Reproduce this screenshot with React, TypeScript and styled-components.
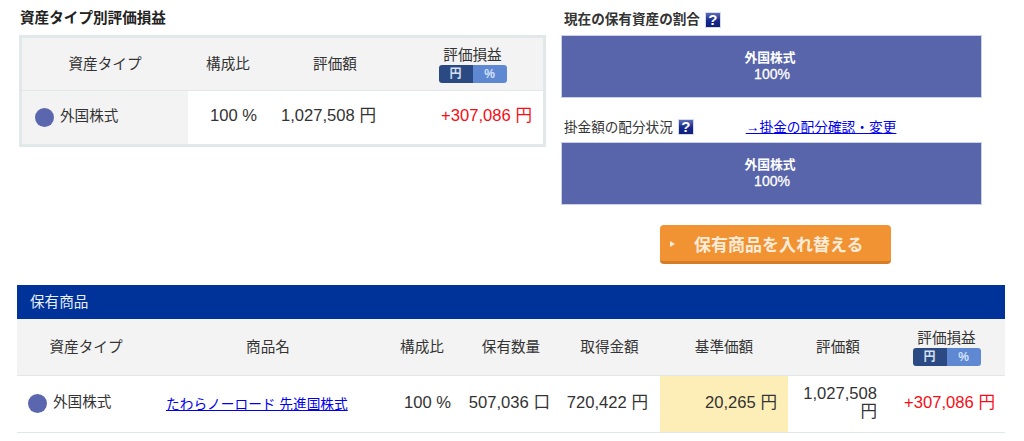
import React from "react";
import styled, { createGlobalStyle } from "styled-components";

const Global = createGlobalStyle`
  html, body { margin: 0; padding: 0; background: #fff; }
  body { font-family: "Liberation Sans", "Noto Sans CJK JP", sans-serif; color: #333; font-size: 15px; }
  * { box-sizing: border-box; }
`;

const Page = styled.div`
  width: 1024px;
  height: 441px;
  overflow: hidden;
  display: flex;
  flex-direction: column;
`;
const Top = styled.div`
  height: 285px;
  display: flex;
  padding: 9px 0 0 19px;
`;
const LeftCol = styled.section`
  width: 527px;
  margin-right: 15px;
`;
const RightCol = styled.section`
  width: 421px;
  display: flex;
  flex-direction: column;
`;
const Title = styled.h2`
  margin: 0 0 8px 1px;
  height: 18px;
  font-size: 14.6px;
  line-height: 18px;
  font-weight: 700;
  color: #222;
`;
const SideHead = styled.div`
  height: 26px;
  padding: 2px 0 0 3px;
  display: flex;
  align-items: flex-start;
`;
const SideTitle = styled.span<{ $bold?: boolean }>`
  font-size: 13.6px;
  line-height: 18px;
  margin-top: ${p => (p.$bold ? 0 : 1)}px;
  font-weight: ${p => (p.$bold ? 700 : 400)};
  color: #333;
`;
const Help = styled.span`
  width: 16px;
  height: 16px;
  margin: 1px 0 0 5px;
  background: linear-gradient(#5c6bb5 0%, #16288a 55%, #0f1f7c 100%);
  border: 1px solid #d5dbee;
  color: #fff;
  font-size: 15px;
  font-weight: 700;
  line-height: 14px;
  text-align: center;
`;
const SideLink = styled.a`
  margin-left: 52px;
  font-size: 13.7px;
  line-height: 18px;
  margin-top: 1px;
  color: #0000ee;
  text-decoration: underline;
`;
const Bar = styled.div`
  height: 63px;
  background: #5865ab;
  border: 1px solid #ccd2ec;
  color: #fff;
  display: flex;
  flex-direction: column;
  align-items: center;
  justify-content: center;
  padding-bottom: 2px;
  font-size: 12.8px;
  line-height: 17px;
  font-weight: 700;
  margin-bottom: 18px;
`;
const BarPct = styled.span`
  font-size: 14px;
  font-weight: 400;
  -webkit-text-stroke: 0.3px #fff;
  padding-left: 1px;
`;
const BarLabel = styled.span`
  padding-right: 3px;
`;
const Swap = styled.button`
  align-self: flex-start;
  margin: 2px 0 0 99px;
  width: 231px;
  height: 39px;
  border: 0;
  border-bottom: 3px solid #d47d25;
  border-radius: 4px;
  background: #f19233;
  color: #fdebd8;
  font-family: inherit;
  font-size: 17px;
  font-weight: 700;
  display: flex;
  align-items: center;
  padding: 1px 0 0 10px;
`;
const Arrow = styled.span`
  width: 0;
  height: 0;
  border-left: 5px solid #fdebd8;
  border-top: 3.5px solid transparent;
  border-bottom: 3.5px solid transparent;
  margin-right: 19px;
`;

const SummaryBox = styled.div`
  border: 3px solid #e0e8ea;
`;
const Row = styled.div<{ $cols: string; $h: number; $line?: boolean }>`
  display: grid;
  grid-template-columns: ${p => p.$cols};
  height: ${p => p.$h}px;
  border-bottom: ${p => (p.$line ? "1px solid #e0e8ea" : "0")};
`;
const Head = styled.div`
  background: #f3f3f3;
  display: flex;
  flex-direction: column;
  align-items: center;
  justify-content: center;
  font-size: 14.6px;
  line-height: 18px;
  color: #333;
`;
const Cell = styled.div<{ $pr?: number; $bg?: string; $red?: boolean; $wrap?: boolean }>`
  display: flex;
  align-items: center;
  justify-content: flex-end;
  text-align: right;
  white-space: ${p => (p.$wrap ? "normal" : "nowrap")};
  padding: 0 ${p => p.$pr ?? 11}px 3px ${p => (p.$wrap ? 10 : 0)}px;
  background: ${p => p.$bg ?? "transparent"};
  color: ${p => (p.$red ? "#f60d16" : "#333")};
  font-size: 16.6px;
  line-height: 18px;
`;
const TypeCell = styled.div<{ $bg?: string; $pl: number }>`
  display: flex;
  align-items: center;
  gap: 6px;
  padding: 0 0 1px ${p => p.$pl}px;
  background: ${p => p.$bg ?? "transparent"};
  font-size: 14.6px;
  line-height: 18px;
`;
const TypeText = styled.span`
  margin-top: -3px;
`;
const Dot = styled.span`
  width: 19px;
  height: 19px;
  border-radius: 50%;
  background: #5a66ad;
`;
const NameCell = styled.div`
  display: flex;
  align-items: center;
  padding: 0 0 3px 11px;
`;
const NameLink = styled.a`
  font-size: 13.7px;
  color: #0000ee;
  text-decoration: underline;
`;
const Toggle = styled.div`
  width: 68px;
  height: 18px;
  display: grid;
  grid-template-columns: 1fr 1fr;
  border-radius: 3px;
  overflow: hidden;
  font-size: 12px;
  line-height: 18px;
  font-weight: 700;
  text-align: center;
  margin-top: 1px;
`;
const ToggleYen = styled.span`
  background: #2b4a84;
  color: #d5e0f2;
`;
const TogglePct = styled.span`
  background: #5f88d3;
  color: #d5e4fa;
`;

const Holdings = styled.section`
  margin-left: 17px;
  width: 988px;
`;
const Banner = styled.div`
  height: 34px;
  background: #003399;
  color: #e8eefa;
  font-size: 14.6px;
  line-height: 34px;
  padding-left: 13px;
`;

const sumCols = "166px 80px 134px 141px";
const holdCols = "138px 226px 82px 96px 101px 128px 100px 117px";

const LossHead = () => (
  <Head>
    評価損益
    <Toggle>
      <ToggleYen>円</ToggleYen>
      <TogglePct>%</TogglePct>
    </Toggle>
  </Head>
);

export default function App() {
  return (
    <Page>
      <Global />
      <Top>
        <LeftCol>
          <Title>資産タイプ別評価損益</Title>
          <SummaryBox>
            <Row $cols={sumCols} $h={53} $line>
              <Head>資産タイプ</Head>
              <Head>構成比</Head>
              <Head>評価額</Head>
              <LossHead />
            </Row>
            <Row $cols={sumCols} $h={53}>
              <TypeCell $bg="#f3f3f3" $pl={13}>
                <Dot />
                <TypeText>外国株式</TypeText>
              </TypeCell>
              <Cell>100 %</Cell>
              <Cell $pr={26}>1,027,508 円</Cell>
              <Cell $red>+307,086 円</Cell>
            </Row>
          </SummaryBox>
        </LeftCol>
        <RightCol>
          <SideHead>
            <SideTitle $bold>現在の保有資産の割合</SideTitle>
            <Help>?</Help>
          </SideHead>
          <Bar>
            <BarLabel>外国株式</BarLabel>
            <BarPct>100%</BarPct>
          </Bar>
          <SideHead>
            <SideTitle>掛金額の配分状況</SideTitle>
            <Help>?</Help>
            <SideLink>→掛金の配分確認・変更</SideLink>
          </SideHead>
          <Bar>
            <BarLabel>外国株式</BarLabel>
            <BarPct>100%</BarPct>
          </Bar>
          <Swap>
            <Arrow />
            保有商品を入れ替える
          </Swap>
        </RightCol>
      </Top>
      <Holdings>
        <Banner>保有商品</Banner>
        <Row $cols={holdCols} $h={57} $line>
          <Head>資産タイプ</Head>
          <Head>商品名</Head>
          <Head>構成比</Head>
          <Head>保有数量</Head>
          <Head>取得金額</Head>
          <Head>基準価額</Head>
          <Head>評価額</Head>
          <LossHead />
        </Row>
        <Row $cols={holdCols} $h={57} $line>
          <TypeCell $pl={11}>
            <Dot />
            <TypeText>外国株式</TypeText>
          </TypeCell>
          <NameCell>
            <NameLink>たわらノーロード 先進国株式</NameLink>
          </NameCell>
          <Cell $pr={12}>100 %</Cell>
          <Cell $pr={9}>507,036 口</Cell>
          <Cell $pr={12}>720,422 円</Cell>
          <Cell $bg="#fdeeb7">20,265 円</Cell>
          <Cell $wrap>1,027,508 円</Cell>
          <Cell $red $pr={10}>+307,086 円</Cell>
        </Row>
      </Holdings>
    </Page>
  );
}
